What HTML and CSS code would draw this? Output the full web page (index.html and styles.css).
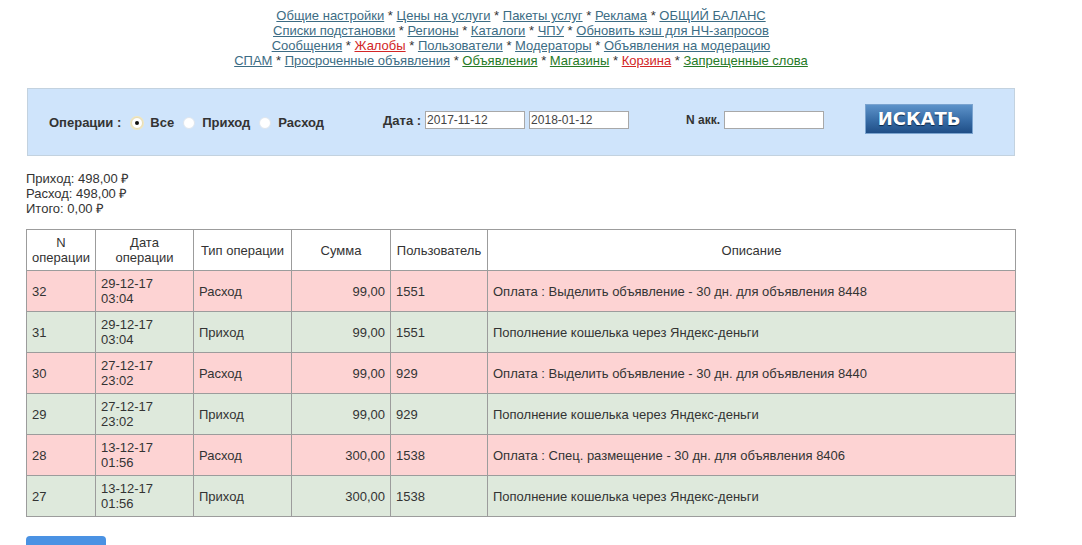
FILE: index.html
```html
<!DOCTYPE html>
<html lang="ru">
<head>
<meta charset="utf-8">
<title>Операции</title>
<link rel="stylesheet" href="styles.css">
</head>
<body>
<div class="page">
  <div class="nav">
    <a href="#">Общие настройки</a> * <a href="#">Цены на услуги</a> * <a href="#">Пакеты услуг</a> * <a href="#">Реклама</a> * <a href="#">ОБЩИЙ БАЛАНС</a><br>
    <a href="#">Списки подстановки</a> * <a href="#">Регионы</a> * <a href="#">Каталоги</a> * <a href="#">ЧПУ</a> * <a href="#">Обновить кэш для НЧ-запросов</a><br>
    <a href="#">Сообщения</a> * <a href="#" class="red">Жалобы</a> * <a href="#">Пользователи</a> * <a href="#">Модераторы</a> * <a href="#">Объявления на модерацию</a><br>
    <a href="#">СПАМ</a> * <a href="#">Просроченные объявления</a> * <a href="#" class="green">Объявления</a> * <a href="#" class="green">Магазины</a> * <a href="#" class="red">Корзина</a> * <a href="#" class="green">Запрещенные слова</a>
  </div>

  <form class="filter">
    <div class="group ops">
      <span class="lbl">Операции :</span>
      <span class="radio checked"></span><span class="rl">Все</span>
      <span class="radio next"></span><span class="rl">Приход</span>
      <span class="radio next"></span><span class="rl">Расход</span>
    </div>
    <div class="group dates">
      <span class="lbl">Дата :</span>
      <input class="inp" type="text" value="2017-11-12">
      <input class="inp second" type="text" value="2018-01-12">
    </div>
    <div class="group acc">
      <span class="lbl small">N акк.</span>
      <input class="inp" type="text" value="">
    </div>
    <button type="button" class="search">ИСКАТЬ</button>
  </form>

  <div class="summary">
    Приход: 498,00 ₽<br>
    Расход: 498,00 ₽<br>
    Итого: 0,00 ₽
  </div>

  <table class="ops-table">
    <colgroup>
      <col class="c1"><col class="c2"><col class="c3"><col class="c4"><col class="c5"><col>
    </colgroup>
    <thead>
      <tr><th>N<br>операции</th><th>Дата<br>операции</th><th>Тип операции</th><th>Сумма</th><th>Пользователь</th><th>Описание</th></tr>
    </thead>
    <tbody>
      <tr class="out"><td>32</td><td>29-12-17<br>03:04</td><td>Расход</td><td class="num">99,00</td><td>1551</td><td>Оплата : Выделить объявление - 30 дн. для объявления 8448</td></tr>
      <tr class="in"><td>31</td><td>29-12-17<br>03:04</td><td>Приход</td><td class="num">99,00</td><td>1551</td><td>Пополнение кошелька через Яндекс-деньги</td></tr>
      <tr class="out"><td>30</td><td>27-12-17<br>23:02</td><td>Расход</td><td class="num">99,00</td><td>929</td><td>Оплата : Выделить объявление - 30 дн. для объявления 8440</td></tr>
      <tr class="in"><td>29</td><td>27-12-17<br>23:02</td><td>Приход</td><td class="num">99,00</td><td>929</td><td>Пополнение кошелька через Яндекс-деньги</td></tr>
      <tr class="out"><td>28</td><td>13-12-17<br>01:56</td><td>Расход</td><td class="num">300,00</td><td>1538</td><td>Оплата : Спец. размещение - 30 дн. для объявления 8406</td></tr>
      <tr class="in"><td>27</td><td>13-12-17<br>01:56</td><td>Приход</td><td class="num">300,00</td><td>1538</td><td>Пополнение кошелька через Яндекс-деньги</td></tr>
    </tbody>
  </table>

  <div class="bottom"><span class="blue-btn"></span></div>
</div>
</body>
</html>
```

FILE: styles.css
```css
html, body {
  margin: 0;
  padding: 0;
  background: #fff;
}
body {
  padding: 8px 0 0 26px;
  font-family: "Liberation Sans", Arial, sans-serif;
  color: #333;
}
.page {
  width: 990px;
}
.nav {
  text-align: center;
  font-size: 13px;
  line-height: 15px;
  color: #333;
}
.nav a {
  color: #3c6c84;
  text-decoration: underline;
}
.nav a.red { color: #d22626; }
.nav a.green { color: #267a26; }

.filter {
  box-sizing: border-box;
  margin: 20px 1px 0 1px;
  height: 68px;
  background: #cfe4fb;
  border: 1px solid #c3d2df;
  display: flex;
  align-items: center;
  padding: 0 0 0 21px;
  font-size: 13px;
}
.group {
  display: flex;
  align-items: center;
}
.lbl {
  font-weight: bold;
  color: #333;
}
.lbl.small { font-size: 12px; }
.ops { margin-top: 1px; }
.radio {
  box-sizing: border-box;
  width: 12px;
  height: 12px;
  border-radius: 50%;
  background: #fff;
  border: 1px solid #dfe6ee;
  margin: 0 7px 0 10px;
  position: relative;
}
.radio.next { margin-left: 9px; }
.radio.checked {
  border-color: #e6dcb4;
  box-shadow: 0 0 0 1px #f1e6bd;
}
.radio.checked::after {
  content: "";
  position: absolute;
  left: 3px;
  top: 3px;
  width: 4px;
  height: 4px;
  border-radius: 50%;
  background: #111;
}
.rl {
  font-weight: bold;
  color: #333;
}
.dates { margin-left: 59px; margin-top: -4px; }
.acc { margin-left: 57px; margin-top: -4px; }
.inp {
  box-sizing: border-box;
  width: 100px;
  height: 18px;
  margin: 0 0 0 4px;
  padding: 0 1px;
  border: 1px solid #a8a8a8;
  background: #fff;
  font-family: "Liberation Sans", Arial, sans-serif;
  font-size: 12px;
  color: #444;
}
.inp.second { margin-left: 4px; }
.acc .inp { margin-left: 4px; }
.search {
  margin: -6px 0 0 41px;
  box-sizing: border-box;
  width: 108px;
  height: 30px;
  border: 1px solid #7aa3cf;
  background: linear-gradient(#5d92c9, #3a6fa9 50%, #1f4e86);
  color: #fff;
  font-family: "DejaVu Sans", Verdana, sans-serif;
  font-weight: bold;
  font-size: 18px;
  text-shadow: 0 1px 1px #0c2746;
  padding: 0;
  line-height: 26px;
}

.summary {
  margin-top: 15px;
  font-size: 13px;
  line-height: 15px;
  color: #333;
}

.ops-table {
  margin-top: 13px;
  width: 990px;
  border-collapse: collapse;
  table-layout: fixed;
  font-size: 13px;
  color: #333;
}
.c1 { width: 69px; }
.c2 { width: 98px; }
.c3 { width: 98px; }
.c4 { width: 99px; }
.c5 { width: 97px; }
.ops-table th,
.ops-table td {
  border: 1px solid #9c9c9c;
  padding: 5px 5px;
  line-height: 15px;
  vertical-align: middle;
}
.ops-table th {
  font-weight: normal;
  text-align: center;
  background: #fff;
}
.ops-table td { text-align: left; }
.ops-table td.num { text-align: right; }
.ops-table tr.out td { background: #fdd3d3; }
.ops-table tr.in td { background: #dee9dc; }

.bottom {
  margin-top: 19px;
}
.blue-btn {
  display: block;
  width: 80px;
  height: 34px;
  border-radius: 4px 4px 0 0;
  background: #4a92e3;
}
```
